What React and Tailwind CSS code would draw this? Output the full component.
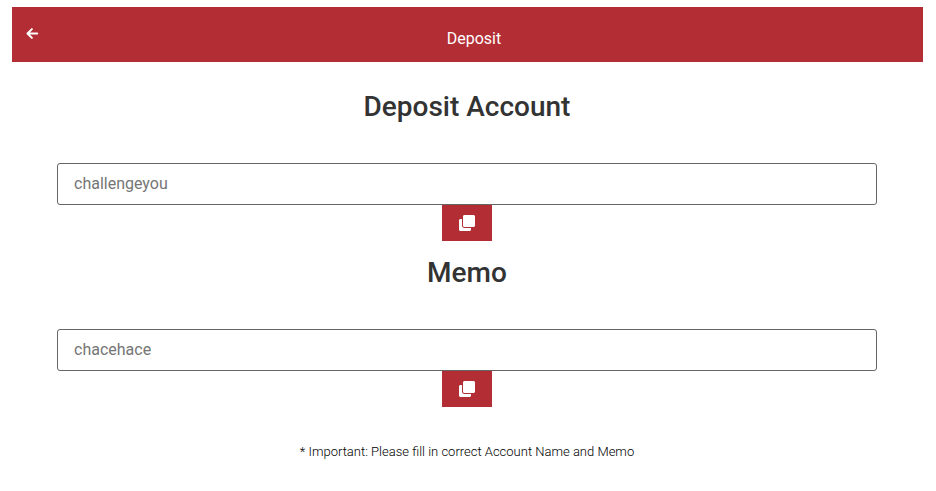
import { FaClone } from "react-icons/fa";

function BackArrow() {
  return (
    <svg
      width="13"
      height="13"
      viewBox="0 0 13 13"
      fill="none"
      stroke="currentColor"
      strokeWidth="2"
      strokeLinecap="round"
      strokeLinejoin="round"
      aria-hidden="true"
    >
      <path d="M11.2 6.5H1.6M5.9 2.1 1.5 6.5l4.4 4.4" />
    </svg>
  );
}

function CopyField({ id, title, placeholder }) {
  return (
    <section className="flex flex-col items-center">
      <h2 className="text-[28px] leading-8 font-medium text-[#333]">
        <label htmlFor={id}>{title}</label>
      </h2>
      <input
        id={id}
        type="text"
        placeholder={placeholder}
        className="mt-10 h-[42px] w-full rounded-[3px] border border-[#666] bg-white px-4 pb-0.5 text-base text-[#666] placeholder:text-[#757575]"
      />
      <button
        type="button"
        aria-label={`Copy ${title}`}
        className="flex h-9 w-[50px] items-center justify-center bg-[#b32d34] text-white"
      >
        <FaClone size={16} />
      </button>
    </section>
  );
}

export default function App() {
  return (
    <div className="bg-white pt-[7px] pr-[13px] pl-3 font-[Roboto,sans-serif]">
      <header className="flex h-[55px] items-center bg-[#b32d34] px-3.5 text-white">
        <button type="button" aria-label="Back" className="pb-0.5">
          <BackArrow />
        </button>
        <h1 className="flex-1 pt-2 text-center text-base">Deposit</h1>
      </header>
      <main className="flex flex-col gap-4 pt-[29px] pr-[46px] pl-[45px]">
        <CopyField id="account" title="Deposit Account" placeholder="challengeyou" />
        <CopyField id="memo" title="Memo" placeholder="chacehace" />
        <p className="pt-[19px] text-center text-[13px] leading-5 font-light text-black">
          * Important: Please fill in correct Account Name and Memo
        </p>
      </main>
    </div>
  );
}
